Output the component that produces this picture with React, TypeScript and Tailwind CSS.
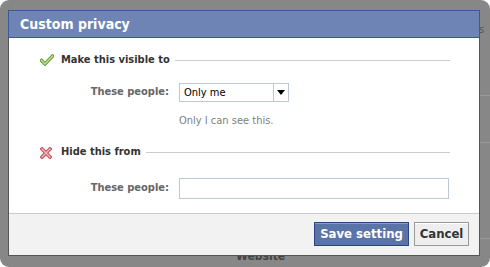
const FONT = { fontFamily: 'Tahoma, "DejaVu Sans Condensed", "DejaVu Sans", Verdana, sans-serif' };

export default function App() {
  return (
    <div className="w-[490px] h-[267px] bg-white overflow-hidden" style={FONT}>
      <div className="relative w-full h-full rounded-[9px] bg-[#878787] pl-[8px] pt-[10px]">
        {/* page underneath the overlay */}
        <span className="absolute left-[479px] top-[22px] text-[11px] text-[#555]">s</span>
        <div className="absolute right-0 top-[95px] w-[10px] h-px bg-[#9a9a9a]" />
        <div className="absolute right-0 top-[142px] w-[10px] h-px bg-[#9a9a9a]" />
        <div className="absolute right-0 top-[238px] w-[10px] h-px bg-[#9a9a9a]" />
        <span className="absolute left-[236px] top-[247px] text-[12px] font-bold text-[#444]">Website</span>

        <PrivacyDialog />
      </div>
    </div>
  );
}

function PrivacyDialog() {
  return (
    <div className="relative w-[472px] border border-[#555] bg-white">
      {/* Title */}
      <div className="-mx-px -mt-px h-[28px] border border-[#3b5998] bg-[#6d84b4] pl-[11px] flex items-center">
        <h2 className="text-[14px] font-bold text-white leading-none">Custom privacy</h2>
      </div>

      {/* Body */}
      <div className="h-[175px] pt-[15px]">
        <SectionHeader icon="check" title="Make this visible to" />

        <div className="mt-[16px] flex items-center h-[19px]">
          <Label />
          <div className="ml-[10px] flex h-[19px] w-[110px] border border-[#bdc7d8] bg-white">
            <span className="flex-1 pl-[4px] text-[11px] leading-[17px] text-black">Only me</span>
            <span className="w-[15px] border-l border-[#bdc7d8] flex items-center justify-center">
              <span className="w-0 h-0 border-l-[4px] border-r-[4px] border-t-[5px] border-l-transparent border-r-transparent border-t-black" />
            </span>
          </div>
        </div>

        <p className="mt-[11px] ml-[170px] text-[11px] text-[#808080]">Only I can see this.</p>

        <div className="mt-[16px]">
          <SectionHeader icon="x" title="Hide this from" />
        </div>

        <div className="mt-[18px] flex items-center h-[21px]">
          <Label />
          <div className="ml-[10px] h-[21px] w-[270px] border border-[#bdc7d8] bg-white" />
        </div>
      </div>

      {/* Footer */}
      <div className="h-[42px] border-t border-[#ccc] bg-[#f2f2f2] flex items-start justify-end gap-[5px] pt-[8px] pr-[10px]">
        <button className="h-[24px] w-[95px] border border-[#29447e] bg-[#5b74a8] shadow-[inset_0_1px_0_#8a9cc2] text-[13px] font-bold text-white">
          Save setting
        </button>
        <button className="h-[24px] w-[55px] border border-[#999] bg-[#eeeeee] shadow-[inset_0_1px_0_#fff] text-[13px] font-bold text-[#333]">
          Cancel
        </button>
      </div>
    </div>
  );
}

function Label() {
  return <span className="w-[160px] text-right text-[11px] font-bold text-[#666]">These people:</span>;
}

function CheckIcon() {
  return (
    <svg width="14" height="12" viewBox="0 0 14 12">
      <path d="M1.5 6.5 L5 10 L12.5 2" fill="none" stroke="#6a9c3c" strokeWidth="3.4" strokeLinecap="square" />
      <path d="M1.5 6.5 L5 10 L12.5 2" fill="none" stroke="#bfe39a" strokeWidth="1.3" strokeLinecap="square" />
    </svg>
  );
}

function CrossIcon() {
  return (
    <svg width="12" height="12" viewBox="0 0 12 12">
      <path d="M2 2 L10 10 M10 2 L2 10" fill="none" stroke="#c9505c" strokeWidth="3.6" strokeLinecap="square" />
      <path d="M2 2 L10 10 M10 2 L2 10" fill="none" stroke="#f3b9bf" strokeWidth="1.4" strokeLinecap="square" />
    </svg>
  );
}

function SectionHeader({ icon, title }: { icon: 'check' | 'x'; title: string }) {
  return (
    <div className="flex items-center h-[14px] pl-[31px] pr-[29px]">
      <span className="w-[21px] flex items-center">{icon === 'check' ? <CheckIcon /> : <CrossIcon />}</span>
      <span className="text-[11px] font-bold text-[#333]">{title}</span>
      <span className="ml-[5px] flex-1 h-px bg-[#ccc]" />
    </div>
  );
}
